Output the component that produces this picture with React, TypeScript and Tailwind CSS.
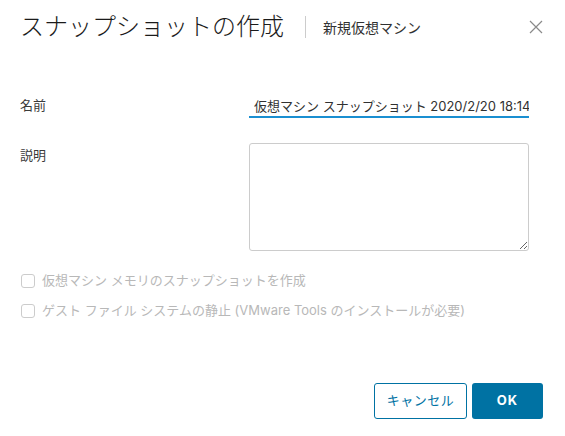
const FONT = { fontFamily: 'Inter, "Noto Sans CJK JP", sans-serif' };

const OPTIONS = [
  '仮想マシン メモリのスナップショットを作成',
  'ゲスト ファイル システムの静止 (VMware Tools のインストールが必要)',
];

export default function App() {
  return (
    <div className="w-[565px] h-[436px] bg-white flex flex-col" style={FONT}>
      {/* Header */}
      <div className="flex items-center h-[32px] mt-[11px] pl-[20px] pr-[22px]">
        <h1 className="text-[24px] font-light text-[#1b1b1b] leading-[32px] whitespace-nowrap">
          スナップショットの作成
        </h1>
        <div className="w-px h-[22px] bg-[#cccccc] ml-[21px]" />
        <span className="ml-[17px] text-[14px] text-[#313131] whitespace-nowrap">新規仮想マシン</span>
        <button className="ml-auto w-[14px] h-[14px] flex items-center justify-center text-[#8a8a8a]">
          <svg width="14" height="14" viewBox="0 0 14 14" fill="none" stroke="currentColor" strokeWidth="1.2">
            <path d="M1 1L13 13M13 1L1 13" />
          </svg>
        </button>
      </div>

      {/* Body */}
      <div className="flex flex-col pl-[20px] pr-[36px] mt-[51px]">
        <div className="flex items-center h-[24px]">
          <label className="w-[229px] text-[13px] text-[#3a3a3a]">名前</label>
          <input
            readOnly
            value="仮想マシン スナップショット 2020/2/20 18:14:03"
            className="w-[280px] h-[24px] pl-[5px] text-[13px] text-[#313131] border-b-2 border-[#1a8fd1] outline-none bg-transparent"
            style={FONT}
          />
        </div>

        <div className="flex mt-[25px]">
          <label className="w-[229px] pt-[3px] leading-[18px] text-[13px] text-[#3a3a3a]">説明</label>
          <textarea className="w-[280px] h-[108px] border border-[#cccccc] rounded-[3px] outline-none" />
        </div>

        <div className="flex flex-col gap-[12px] mt-[21px] pl-px">
          {OPTIONS.map((text) => (
            <div key={text} className="flex items-center h-[18px]">
              <span className="w-[14px] h-[14px] border border-[#cccccc] rounded-[3px] bg-white shrink-0" />
              <span className="ml-[7px] text-[13px] text-[#b8b8b8] whitespace-nowrap">{text}</span>
            </div>
          ))}
        </div>
      </div>

      {/* Footer */}
      <div className="flex justify-end gap-[5px] mt-[63px] pr-[22px]">
        <button className="w-[93px] h-[36px] border border-[#0072a3] rounded-[3px] text-[13px] tracking-[0.5px] text-[#0072a3]">
          キャンセル
        </button>
        <button className="w-[71px] h-[36px] bg-[#0072a3] rounded-[3px] text-[13px] font-bold tracking-[1px] text-white">
          OK
        </button>
      </div>
    </div>
  );
}
